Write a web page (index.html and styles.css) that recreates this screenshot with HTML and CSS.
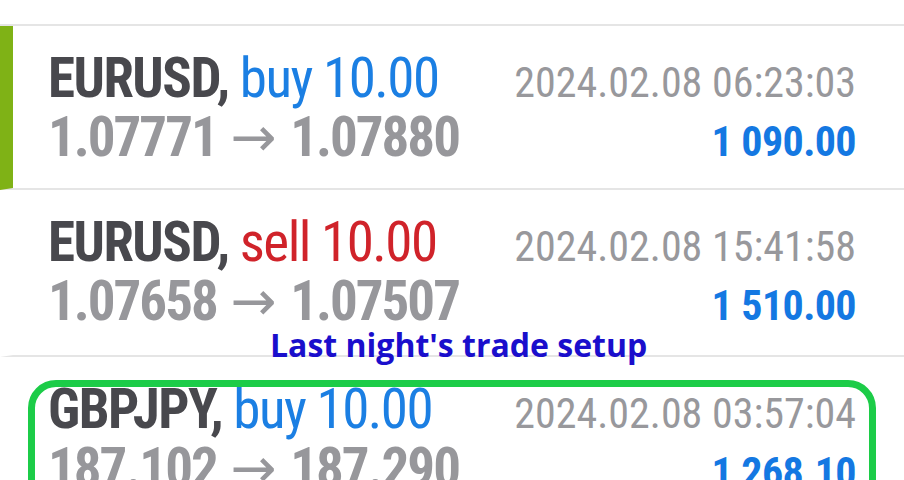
FILE: index.html
```html
<!DOCTYPE html>
<html>
<head>
<meta charset="utf-8">
<link rel="stylesheet" href="styles.css">
</head>
<body>
<div class="page">
  <div class="list">
    <div class="row row-active">
      <div class="line">
        <div class="title"><span class="sym">EURUSD,</span> <span class="buy">buy 10.00</span></div>
        <div class="time">2024.02.08 06:23:03</div>
      </div>
      <div class="line">
        <div class="prices">1.07771 <span class="arr">→</span> 1.07880</div>
        <div class="profit">1 090.00</div>
      </div>
    </div>
    <div class="row">
      <div class="line">
        <div class="title"><span class="sym">EURUSD,</span> <span class="sell">sell 10.00</span></div>
        <div class="time">2024.02.08 15:41:58</div>
      </div>
      <div class="line">
        <div class="prices">1.07658 <span class="arr">→</span> 1.07507</div>
        <div class="profit">1 510.00</div>
      </div>
    </div>
    <div class="row">
      <div class="line">
        <div class="title"><span class="sym">GBPJPY,</span> <span class="buy">buy 10.00</span></div>
        <div class="time">2024.02.08 03:57:04</div>
      </div>
      <div class="line">
        <div class="prices">187.102 <span class="arr">→</span> 187.290</div>
        <div class="profit">1 268.10</div>
      </div>
    </div>
  </div>
  <div class="caption">Last night's trade setup</div>
  <div class="highlight"></div>
</div>
</body>
</html>
```
FILE: styles.css
```css
html, body {
  margin: 0;
  padding: 0;
  background: #ffffff;
}
.page {
  position: relative;
  width: 904px;
  height: 480px;
  overflow: hidden;
  padding-top: 24px;
  box-sizing: border-box;
  font-family: "Roboto Condensed", Roboto, sans-serif;
}
.list {
  border-top: 2px solid #e5e5e5;
}
.row {
  display: flex;
  flex-direction: column;
  height: 164px;
  padding: 23px 48px 0 35px;
  box-sizing: border-box;
  border-bottom: 2px solid #e5e5e5;
  border-left: 13px solid transparent;
}
.row + .row {
  height: 167px;
}
.row-active {
  border-left-color: #7fb216;
}
.line {
  display: flex;
  justify-content: space-between;
  align-items: baseline;
  height: 59px;
  line-height: 59px;
  white-space: nowrap;
}
.title {
  font-size: 55px;
  letter-spacing: -1.5px;
}
.sym {
  font-weight: 700;
  color: #48484d;
}
.buy {
  color: #1b7fe3;
}
.sell {
  color: #d0232a;
}
.prices {
  font-size: 55px;
  font-weight: 700;
  letter-spacing: -2px;
  color: #97979b;
}
.arr {
  font-family: "DejaVu Sans", sans-serif;
  font-weight: 400;
  letter-spacing: 0;
  margin: 0 3px;
}
.time {
  font-size: 42px;
  color: #98989c;
}
.profit {
  font-size: 42px;
  font-weight: 700;
  letter-spacing: -0.6px;
  color: #1478e2;
}
.caption {
  position: absolute;
  left: 270px;
  top: 325px;
  font-family: "Open Sans", sans-serif;
  font-weight: 700;
  font-size: 32px;
  line-height: 40px;
  color: #1a0ecc;
  white-space: nowrap;
}
.highlight {
  position: absolute;
  left: 28px;
  top: 380px;
  width: 848px;
  height: 160px;
  box-sizing: border-box;
  border: 7px solid #1ccc48;
  border-radius: 28px;
}
```
